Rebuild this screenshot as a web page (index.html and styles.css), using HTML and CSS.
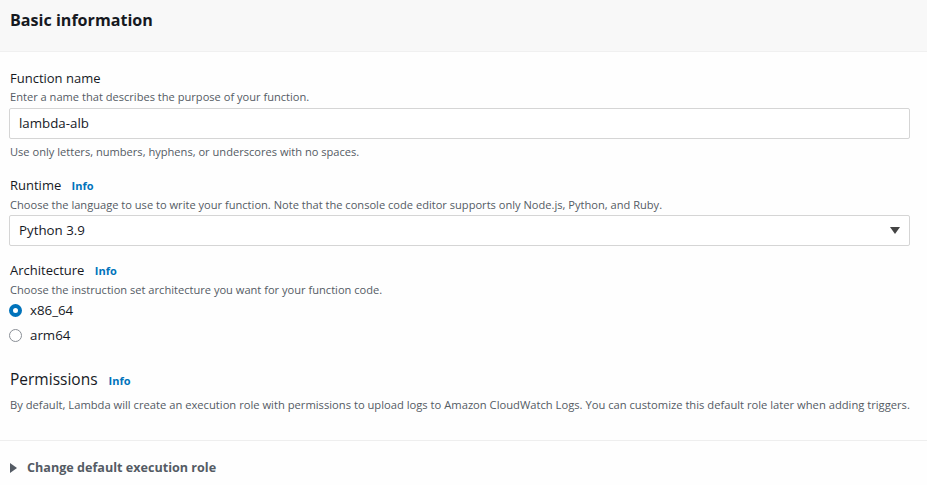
FILE: index.html
```html
<!DOCTYPE html>
<html>
<head>
<meta charset="utf-8">
<link rel="stylesheet" href="styles.css">
</head>
<body>
<div class="panel">
  <div class="header"><h2 class="title">Basic information</h2></div>
  <div class="content">
    <div class="field">
      <div class="label">Function name</div>
      <div class="desc">Enter a name that describes the purpose of your function.</div>
      <div class="input">lambda-alb</div>
      <div class="hint">Use only letters, numbers, hyphens, or underscores with no spaces.</div>
    </div>
    <div class="field">
      <div class="label">Runtime <span class="info">Info</span></div>
      <div class="desc">Choose the language to use to write your function. Note that the console code editor supports only Node.js, Python, and Ruby.</div>
      <div class="input select"><span>Python 3.9</span><span class="caret"></span></div>
    </div>
    <div class="field arch">
      <div class="label">Architecture <span class="info">Info</span></div>
      <div class="desc">Choose the instruction set architecture you want for your function code.</div>
      <div class="radios">
        <div class="radio"><span class="dot checked"></span>x86_64</div>
        <div class="radio"><span class="dot"></span>arm64</div>
      </div>
    </div>
    <div class="perm">
      <div class="perm-title">Permissions <span class="info">Info</span></div>
      <div class="desc">By default, Lambda will create an execution role with permissions to upload logs to Amazon CloudWatch Logs. You can customize this default role later when adding triggers.</div>
    </div>
  </div>
  <div class="expander"><span class="tri"></span>Change default execution role</div>
</div>
</body>
</html>
```
FILE: styles.css
```css
html, body { margin: 0; padding: 0; background: #fefefe; }
body { font-family: "Open Sans", "Noto Sans", sans-serif; color: #16191f; }
.panel { width: 927px; height: 485px; overflow: hidden; }
.header { height: 52px; background: #f8f8f8; border-bottom: 1px solid #f0f0f0; box-sizing: border-box; padding: 8px 10px 0; }
.title { margin: 0; font-size: 16.1px; font-weight: 700; line-height: 24px; color: #16191f; }
.content { padding: 16px 10px 0 10px; border-bottom: 1px solid #eeeeee; height: 389px; box-sizing: border-box; }
.field { margin-bottom: 15px; }
.label { font-size: 13px; line-height: 20px; color: #16191f; }
.info { font-size: 11px; font-weight: 700; color: #0073bb; margin-left: 7px; }
.desc { font-size: 11.1px; line-height: 16px; color: #545b64; margin-top: 1px; }
.input { margin-top: 3px; height: 31px; box-sizing: border-box; width: 901px; margin-left: -1px; border: 1px solid #d5d5d5; border-radius: 2px; background: #fff; font-size: 13.3px; line-height: 29px; padding-left: 9px; color: #16191f; }
.hint { font-size: 11.1px; line-height: 16px; color: #545b64; margin-top: 5px; }
.select { display: flex; justify-content: space-between; align-items: center; padding-right: 9px; margin-top: 2px; }
.caret { width: 0; height: 0; border-left: 5px solid transparent; border-right: 5px solid transparent; border-top: 7px solid #444; }
.field + .arch { margin-top: -1px; }
.radios { margin-top: 0; }
.radio { display: flex; align-items: center; font-size: 13.3px; line-height: 25px; color: #16191f; }
.dot { width: 13px; height: 13px; border-radius: 50%; border: 1px solid #8a8f96; box-sizing: border-box; margin-right: 8px; margin-left: -1px; background: #fff; }
.dot.checked { border: 4px solid #0073bb; }
.perm { margin-top: 19px; }
.perm-title { font-size: 15.5px; line-height: 24px; color: #16191f; }
.perm .desc { margin-top: 4px; font-size: 11.2px; }
.expander { display: flex; align-items: center; padding: 18px 10px 0 10px; font-size: 12.6px; line-height: 18px; font-weight: 700; color: #545b64; }
.tri { width: 0; height: 0; border-top: 5px solid transparent; border-bottom: 5px solid transparent; border-left: 7px solid #545b64; margin-right: 10px; }
```
